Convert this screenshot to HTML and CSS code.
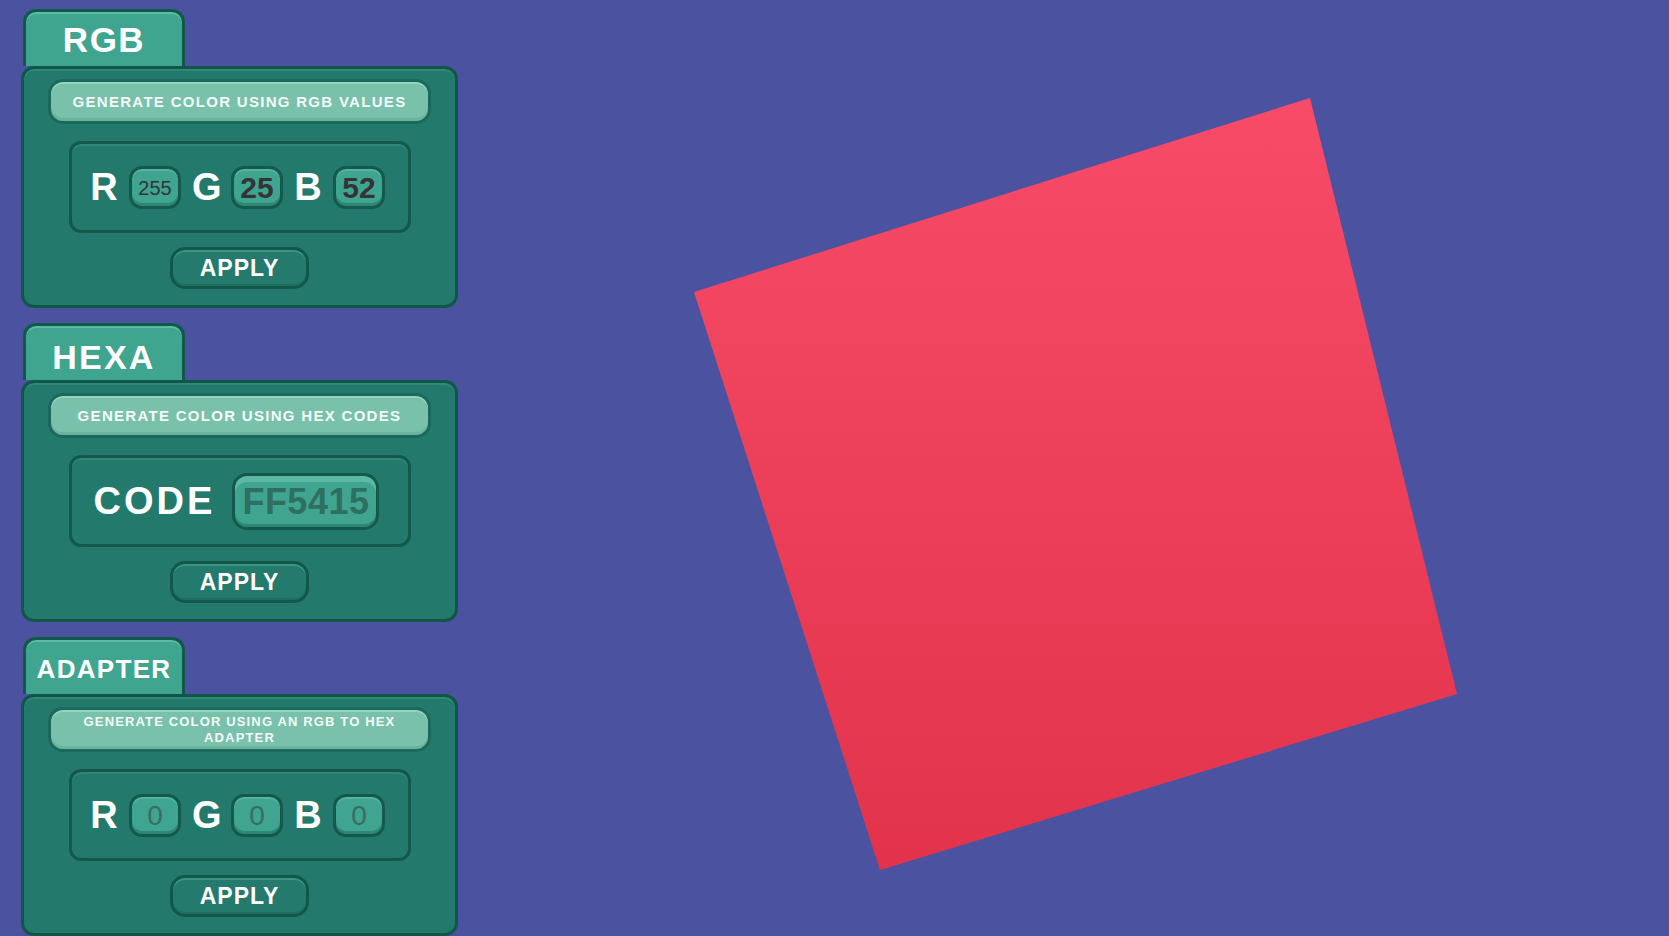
FILE: index.html
```html
<!DOCTYPE html>
<html lang="en">
<head>
<meta charset="utf-8">
<title>Color Generator</title>
<link rel="stylesheet" href="styles.css">
</head>
<body>
<div class="page">
  <div class="column">
    <section class="group">
      <div class="tab"><span class="tab-title t-rgb">RGB</span></div>
      <div class="panel">
        <div class="desc">GENERATE COLOR USING RGB VALUES</div>
        <div class="inner">
          <div class="row">
            <span class="letter">R</span>
            <span class="field"><span class="val small">255</span></span>
            <span class="letter">G</span>
            <span class="field"><span class="val">25</span></span>
            <span class="letter">B</span>
            <span class="field"><span class="val">52</span></span>
          </div>
        </div>
        <button class="apply">APPLY</button>
      </div>
    </section>

    <section class="group">
      <div class="tab"><span class="tab-title t-hexa">HEXA</span></div>
      <div class="panel">
        <div class="desc">GENERATE COLOR USING HEX CODES</div>
        <div class="inner">
          <div class="row row-code">
            <span class="letter code">CODE</span>
            <span class="field hex"><span class="val hexval">FF5415</span></span>
          </div>
        </div>
        <button class="apply">APPLY</button>
      </div>
    </section>

    <section class="group">
      <div class="tab"><span class="tab-title t-adapter">ADAPTER</span></div>
      <div class="panel">
        <div class="desc desc-small">GENERATE COLOR USING AN RGB TO HEX ADAPTER</div>
        <div class="inner">
          <div class="row">
            <span class="letter">R</span>
            <span class="field"><span class="val dim">0</span></span>
            <span class="letter">G</span>
            <span class="field"><span class="val dim">0</span></span>
            <span class="letter">B</span>
            <span class="field"><span class="val dim">0</span></span>
          </div>
        </div>
        <button class="apply">APPLY</button>
      </div>
    </section>
  </div>

  <div class="canvas">
    <svg class="scene" viewBox="458 0 1211 936" preserveAspectRatio="xMinYMin slice" xmlns="http://www.w3.org/2000/svg">
      <defs>
        <linearGradient id="sq" gradientUnits="userSpaceOnUse" x1="0" y1="98" x2="0" y2="870">
          <stop offset="0" stop-color="#f74b68"/>
          <stop offset="1" stop-color="#e2334b"/>
        </linearGradient>
      </defs>
      <polygon points="1310,98 1457,694 880,870 694,292" fill="url(#sq)"/>
    </svg>
  </div>
</div>
</body>
</html>
```

FILE: styles.css
```css
html, body {
  margin: 0;
  padding: 0;
}

body {
  background: #4b52a0;
  font-family: "Liberation Sans", Arial, sans-serif;
  color: #ffffff;
  overflow: hidden;
}

.page {
  display: flex;
  width: 1669px;
  height: 936px;
}

.column {
  width: 437px;
  padding: 9px 0 0 21px;
  display: flex;
  flex-direction: column;
  gap: 15px;
  flex-shrink: 0;
}

.group {
  display: flex;
  flex-direction: column;
}

.tab {
  width: 156px;
  height: 54px;
  margin-left: 2px;
  background: #3fa58f;
  border: 3px solid #12584a;
  border-bottom: none;
  border-radius: 13px 13px 0 0;
  box-shadow: inset 0 2px 0 #5dbaa5;
  display: flex;
  align-items: center;
  justify-content: center;
}

.tab-title {
  font-weight: bold;
  color: #ffffff;
  line-height: 1;
}

.t-rgb {
  font-size: 35px;
  letter-spacing: 1.5px;
  margin-top: 0;
}

.t-hexa {
  font-size: 34px;
  letter-spacing: 2.2px;
  margin-top: 8px;
}

.t-adapter {
  font-size: 26px;
  letter-spacing: 1.3px;
  margin-top: 4px;
}

.panel {
  box-sizing: border-box;
  width: 437px;
  height: 242px;
  background: #237a6c;
  border: 3px solid #10574a;
  border-radius: 13px;
  box-shadow: inset 0 2px 0 #2f8878;
  padding: 10px 0 0;
  display: flex;
  flex-direction: column;
  align-items: center;
}

.desc {
  box-sizing: border-box;
  width: 383px;
  height: 45px;
  background: #79c1ab;
  border: 3px solid #1a695b;
  border-radius: 15px;
  box-shadow: inset 0 2px 0 #93d3bf, inset 0 -3px 0 #6cb39e;
  display: flex;
  align-items: center;
  justify-content: center;
  text-align: center;
  font-weight: bold;
  font-size: 15px;
  letter-spacing: 1.3px;
  color: #f4fbf8;
  padding: 0 18px;
}

.desc-small {
  font-size: 13px;
  letter-spacing: 1.15px;
  line-height: 16px;
  padding: 0 22px;
}

.inner {
  box-sizing: border-box;
  width: 342px;
  height: 92px;
  margin-top: 17px;
  border: 3px solid #13584b;
  border-radius: 12px;
  background: #237a6c;
  box-shadow: inset 0 2px 0 #2f8878;
  display: flex;
  align-items: center;
  justify-content: center;
}

.row {
  display: flex;
  align-items: center;
  gap: 11px;
  margin-left: -4px;
}

.row-code {
  gap: 20px;
  margin-left: -6px;
}

.letter {
  font-weight: bold;
  font-size: 38px;
  line-height: 1;
  color: #ffffff;
  width: 28px;
  text-align: center;
}

.letter.code {
  width: auto;
  letter-spacing: 3px;
  margin-right: -3px;
}

.field {
  box-sizing: border-box;
  width: 52px;
  height: 43px;
  background: #40a590;
  border: 3px solid #14594b;
  border-radius: 13px;
  box-shadow: inset 0 -3px 0 #2e8775, inset 0 2px 0 #55b49f;
  display: flex;
  align-items: center;
  justify-content: center;
  overflow: visible;
}

.field.hex {
  width: 147px;
  height: 57px;
  border-radius: 15px;
  box-shadow: inset 0 -3px 0 #2e8775, inset 0 6px 0 #5db8a4;
  justify-content: flex-start;
  padding-left: 7px;
}

.val {
  font-size: 30px;
  line-height: 1;
  color: #343336;
  font-weight: bold;
  margin-top: 1px;
}

.val.small {
  font-size: 20px;
  font-weight: normal;
}

.val.dim {
  font-size: 28px;
  font-weight: normal;
  color: #3a6d62;
}

.val.hexval {
  font-size: 36px;
  font-weight: bold;
  color: #2f6f61;
  letter-spacing: 0.5px;
}

.apply {
  box-sizing: border-box;
  width: 139px;
  height: 42px;
  margin-top: 14px;
  background: #247a6c;
  border: 3px solid #13574a;
  border-radius: 15px;
  box-shadow: inset 0 2px 0 #3b9583, inset 0 -2px 0 #1d6f61;
  font-family: "Liberation Sans", Arial, sans-serif;
  font-weight: bold;
  font-size: 23px;
  letter-spacing: 1px;
  color: #ffffff;
  padding: 0;
  line-height: 1;
}

.canvas {
  flex: 1;
  height: 936px;
}

.scene {
  display: block;
  width: 1211px;
  height: 936px;
}
```
